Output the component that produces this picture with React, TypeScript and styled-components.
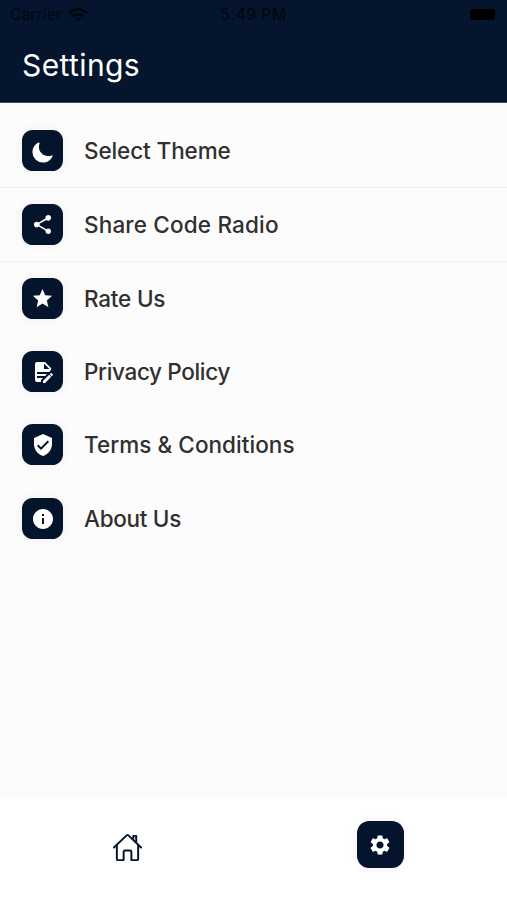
import React from 'react';
import styled, { createGlobalStyle } from 'styled-components';
import { IoMoon, IoHomeOutline } from 'react-icons/io5';
import { MdShare, MdStar, MdVerifiedUser, MdInfo, MdSettings } from 'react-icons/md';

const GlobalStyle = createGlobalStyle`
  *, *::before, *::after { box-sizing: border-box; }
  body { margin: 0; background: #fff; font-family: Inter, "Liberation Sans", sans-serif; }
`;

const Screen = styled.div`
  width: 100%;
  height: 100vh;
  display: flex;
  flex-direction: column;
  background: #fcfcfc;
  overflow: hidden;
`;

const Header = styled.header`
  height: 103px;
  flex: none;
  background: #04152d;
  border-bottom: 1px solid #404a62;
`;

const StatusBar = styled.div`
  height: 29px;
  display: grid;
  grid-template-columns: 1fr auto 1fr;
  align-items: center;
  padding: 0 12px 0 10px;
  color: #000711;
  font-size: 15.6px;
`;

const Carrier = styled.div`
  display: flex;
  align-items: center;
  gap: 6px;
  letter-spacing: 0.1px;
`;

const Clock = styled.div`
  padding-left: 2px;
  font-weight: 500;
  font-size: 15.5px;
  letter-spacing: 0.6px;
`;

const Battery = styled.div`
  justify-self: end;
  width: 25px;
  height: 11px;
  border-radius: 3px;
  background: #000003;
`;

const Title = styled.h1`
  margin: 0;
  padding: 16px 0 0 22px;
  color: #fff;
  font-size: 30px;
  line-height: 40px;
  font-weight: 400;
  letter-spacing: 0.4px;
`;

const List = styled.ul`
  flex: 1;
  margin: 0;
  padding: 11px 0 0;
  list-style: none;
`;

const Row = styled.li<{ $divider?: string }>`
  height: ${(p) => (p.$divider ? 74 : 73)}px;
  display: flex;
  align-items: center;
  gap: 21px;
  padding-left: 22px;
  border-bottom: ${(p) => (p.$divider ? `1px solid ${p.$divider}` : 'none')};
`;

const Tile = styled.span<{ $size: number }>`
  flex: none;
  width: ${(p) => p.$size}px;
  height: ${(p) => p.$size}px;
  border-radius: ${(p) => p.$size * 0.26}px;
  display: grid;
  place-items: center;
  color: #fff;
  background: #03142c;
  box-shadow: 0 0 10px rgba(3, 20, 44, 0.06);

  svg { display: block; }
`;

const MoonIcon = styled(IoMoon)`
  margin-top: 3px;
`;

const Label = styled.span<{ $spacing: number }>`
  color: #303030;
  font-size: 22.5px;
  line-height: 30px;
  padding-top: 1px;
  font-weight: 500;
  white-space: nowrap;
  letter-spacing: ${(p) => p.$spacing}px;
`;

const TabBar = styled.nav`
  flex: none;
  height: 102px;
  display: grid;
  grid-template-columns: 1fr 1fr;
  justify-items: center;
  align-items: start;
  padding-top: 23px;
  background: #fff;
`;

const Tab = styled.div`
  height: 47px;
  display: flex;
  align-items: center;
  color: #03142c;
`;

const HomeTab = styled(Tab)`
  padding: 5px 0 0 2px;
`;

const WifiIcon = () => (
  <svg width="20" height="14" viewBox="0 0 20 14" fill="none" stroke="currentColor" strokeWidth="2.8">
    <path d="M1 5.2C6-.1 14-.1 19 5.2M4.3 8.5c3.1-3.1 8.3-3.1 11.4 0" />
    <path d="M10 13.6 7.3 10.9c1.5-1.4 3.9-1.4 5.4 0z" fill="currentColor" stroke="none" />
  </svg>
);

const DocumentEditIcon = () => (
  <svg width="24" height="24" viewBox="0 0 24 24" fill="currentColor">
    <path d="M6 2a2 2 0 0 0-2 2v16a2 2 0 0 0 2 2h4v-1.91L12.09 18H6v-2h8.09l2-2H6v-2h12.09L20 10.09V8l-6-6H6m7 1.5L18.5 9H13V3.5m7.15 9.5c-.15 0-.29.05-.4.16l-1.02 1.02 2.09 2.08 1.02-1.01a.56.56 0 0 0 0-.79l-1.3-1.3a.56.56 0 0 0-.39-.16m-2.01 1.77L12 20.92V23h2.08l6.15-6.15-2.09-2.08z" />
  </svg>
);

const items = [
  { label: 'Select Theme', spacing: -0.1, divider: '#f0f1f2', icon: <MoonIcon size={23} /> },
  { label: 'Share Code Radio', spacing: 0.17, divider: '#f0f1f2', icon: <MdShare size={23} /> },
  { label: 'Rate Us', spacing: -0.2, icon: <MdStar size={23} /> },
  { label: 'Privacy Policy', spacing: -0.35, icon: <DocumentEditIcon /> },
  { label: 'Terms & Conditions', spacing: 0.05, divider: '#f8f8f8', icon: <MdVerifiedUser size={24} /> },
  { label: 'About Us', spacing: -0.3, icon: <MdInfo size={24} /> },
];

export default function App() {
  return (
    <>
      <GlobalStyle />
      <Screen>
        <Header>
          <StatusBar>
            <Carrier>Carrier <WifiIcon /></Carrier>
            <Clock>5:49 PM</Clock>
            <Battery />
          </StatusBar>
          <Title>Settings</Title>
        </Header>
        <List>
          {items.map((item) => (
            <Row key={item.label} $divider={item.divider}>
              <Tile $size={41}>{item.icon}</Tile>
              <Label $spacing={item.spacing}>{item.label}</Label>
            </Row>
          ))}
        </List>
        <TabBar>
          <HomeTab><IoHomeOutline size={31} /></HomeTab>
          <Tab><Tile $size={47}><MdSettings size={24} /></Tile></Tab>
        </TabBar>
      </Screen>
    </>
  );
}
